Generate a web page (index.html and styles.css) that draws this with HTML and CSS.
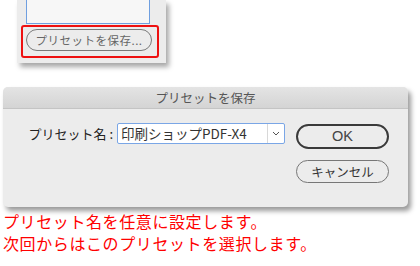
FILE: index.html
```html
<!DOCTYPE html>
<html lang="ja">
<head>
    <meta charset="UTF-8">
    <meta name="viewport" content="width=device-width, initial-scale=1.0">
    <title>プリセットを保存</title>
    <link rel="stylesheet" href="styles.css">
</head>
<body>
    <!-- 上：書き出しパネルの一部 -->
    <div class="top-panel">
        <div class="list-box"></div>
        <div class="highlight">
            <div class="pill-btn">プリセットを保存...</div>
        </div>
    </div>

    <!-- ダイアログ -->
    <div class="dialog">
        <div class="title-bar">プリセットを保存</div>
        <div class="dialog-body">
            <div class="name-row">
                <span class="name-label">プリセット名 :</span>
                <div class="select-box">
                    <span class="select-text">印刷ショップPDF-X4</span>
                    <span class="select-arrow">
                        <svg width="8" height="5" viewBox="0 0 8 5"><path d="M1 1 L4 4 L7 1" fill="none" stroke="#555" stroke-width="1"/></svg>
                    </span>
                </div>
            </div>
            <div class="buttons">
                <div class="btn btn-ok">OK</div>
                <div class="btn btn-cancel">キャンセル</div>
            </div>
        </div>
    </div>

    <p class="note">プリセット名を任意に設定します。</p>
    <p class="note">次回からはこのプリセットを選択します。</p>
</body>
</html>
```

FILE: styles.css
```css
body {
    margin: 0;
    padding: 0;
    background-color: #fff;
    font-family: "Noto Sans CJK JP", "Noto Sans", sans-serif;
}
/* 上のパネル */
.top-panel {
    margin-left: 17px;
    width: 149px;
    height: 63px;
    background-color: #ececec;
    box-shadow: 3px 4px 5px rgba(0, 0, 0, 0.35);
}
.list-box {
    margin-left: 9px;
    width: 122px;
    height: 23px;
    background-color: #f7f7f7;
    border: 1px solid #6f9fe0;
    border-top: none;
}
.highlight {
    margin: 1px 0 0 4px;
    width: 131px;
    height: 27px;
    padding: 2px 0 0 3px;
    border: 2px solid #ee1111;
    border-radius: 3px;
    box-sizing: content-box;
}
.pill-btn {
    width: 124px;
    height: 20px;
    border: 1px solid #7a7a7a;
    border-radius: 11px;
    color: #666;
    font-size: 11.5px;
    line-height: 20px;
    text-align: center;
    letter-spacing: 0.5px;
}
/* ダイアログ */
.dialog {
    margin: 24px 0 0 3px;
    width: 405px;
    height: 120px;
    background-color: #ececec;
    border-radius: 5px;
    box-shadow: 3px 4px 5px rgba(0, 0, 0, 0.4);
    overflow: hidden;
}
.title-bar {
    height: 21px;
    line-height: 21px;
    text-align: center;
    font-size: 12.5px;
    color: #555;
    background: linear-gradient(#e4e4e4, #d4d4d4);
    border-bottom: 1px solid #c4c4c4;
}
.dialog-body {
    display: flex;
    align-items: flex-start;
    padding: 14px 0 0 24px;
}
.name-row {
    display: flex;
    align-items: center;
    gap: 4px;
}
.name-label {
    width: 86px;
    text-align: right;
    font-size: 13px;
    color: #222;
    line-height: 21px;
    white-space: nowrap;
}
.select-box {
    display: flex;
    width: 166px;
    height: 19px;
    background-color: #fff;
    border: 1px solid #7aa6e6;
    border-radius: 2px;
}
.select-text {
    flex: 1;
    padding-left: 3px;
    font-size: 13.5px;
    line-height: 19px;
    color: #333;
}
.select-arrow {
    width: 16px;
    display: flex;
    align-items: center;
    justify-content: center;
    border-left: 1px solid #d8d8d8;
}
.buttons {
    display: flex;
    flex-direction: column;
    gap: 11px;
    margin-left: 11px;
    margin-top: 1px;
}
.btn {
    width: 93px;
    box-sizing: border-box;
    text-align: center;
    color: #333;
    border-radius: 13px;
}
.btn-ok {
    height: 25px;
    line-height: 21px;
    border: 2px solid #3a3a3a;
    font-family: "Liberation Sans", "Noto Sans CJK JP", sans-serif;
    font-size: 14.5px;
    color: #444;
}
.btn-cancel {
    height: 23px;
    line-height: 21px;
    border: 1px solid #777;
    font-size: 12.5px;
}
/* 説明文 */
.note {
    margin: 0 0 0 3px;
    color: #ff0000;
    font-size: 16px;
    line-height: 22px;
    letter-spacing: 0.6px;
}
.note:first-of-type {
    margin-top: 3px;
}
```
